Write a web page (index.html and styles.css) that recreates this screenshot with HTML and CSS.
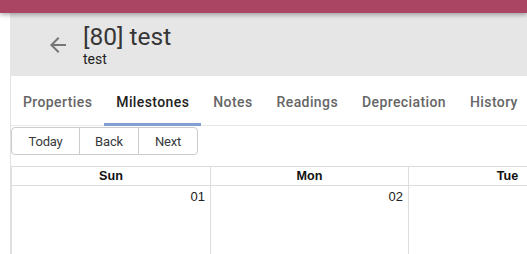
FILE: index.html
```html
<!DOCTYPE html>
<html lang="en">
<head>
    <meta charset="UTF-8">
    <meta name="viewport" content="width=device-width, initial-scale=1.0">
    <title>[80] test</title>
    <link rel="stylesheet" href="styles.css">
</head>
<body>
<div class="appbar"></div>
<div class="layout">
    <div class="gutter"></div>
    <div class="main">
        <div class="page-header">
            <button class="back-btn" aria-label="Back">
                <svg viewBox="0 0 24 24" width="24" height="24"><path d="M20 11H7.83l5.59-5.59L12 4l-8 8 8 8 1.41-1.41L7.83 13H20v-2z"/></svg>
            </button>
            <div class="titles">
                <div class="title">[80] test</div>
                <div class="subtitle">test</div>
            </div>
        </div>
        <div class="panel">
            <div class="tabs">
                <div class="tab">Properties</div>
                <div class="tab active">Milestones</div>
                <div class="tab">Notes</div>
                <div class="tab">Readings</div>
                <div class="tab">Depreciation</div>
                <div class="tab">History</div>
            </div>
            <div class="toolbar">
                <div class="btn-group">
                    <button class="btn-today">Today</button>
                    <button>Back</button>
                    <button>Next</button>
                </div>
            </div>
            <!-- only the first three days fit in the window -->
            <div class="month">
                <div class="month-header">
                    <div class="day-name">Sun</div>
                    <div class="day-name">Mon</div>
                    <div class="day-name">Tue</div>
                    <div class="day-name"></div>
                    <div class="day-name"></div>
                    <div class="day-name"></div>
                    <div class="day-name"></div>
                </div>
                <div class="month-row">
                    <div class="day-cell">01</div>
                    <div class="day-cell">02</div>
                    <div class="day-cell"></div>
                    <div class="day-cell"></div>
                    <div class="day-cell"></div>
                    <div class="day-cell"></div>
                    <div class="day-cell"></div>
                </div>
            </div>
        </div>
    </div>
</div>
</body>
</html>
```

FILE: styles.css
```css
body {
    margin: 0;
    padding: 0;
    font-family: Roboto, "Liberation Sans", Arial, sans-serif;
    background-color: #fff;
    overflow: hidden;
}
.appbar {
    position: relative;
    z-index: 2;
    height: 13px;
    background-color: #aa4564;
    box-shadow: 0 2px 4px rgba(0, 0, 0, 0.3);
}
.layout {
    display: flex;
}
.gutter {
    width: 10px;
    flex: none;
}
.main {
    flex: 1;
    min-width: 0;
    overflow: hidden;
}
.page-header {
    height: 63px;
    background-color: #e6e6e6;
    display: flex;
    align-items: center;
    padding-left: 24px;
}
.back-btn {
    width: 48px;
    height: 48px;
    padding: 12px;
    border: none;
    background: none;
    fill: #757575;
    margin-top: 1px;
}
.back-btn svg {
    display: block;
}
.titles {
    margin-left: 1px;
    color: #363636;
}
.title {
    font-size: 24.5px;
    line-height: 29px;
}
.subtitle {
    font-size: 14px;
    line-height: 17px;
    color: #222;
}
.panel {
    border-left: 1px solid #e2e2e2;
}
.tabs {
    display: flex;
    height: 50px;
    border-bottom: 1px solid #e8e8e8;
    box-sizing: border-box;
}
.tab {
    position: relative;
    padding: 3px 12px 0;
    display: flex;
    align-items: center;
    font-size: 14px;
    font-weight: 500;
    letter-spacing: 0.4px;
    color: #666;
    white-space: nowrap;
}
.tab.active {
    color: #222;
}
.tab.active::after {
    content: "";
    position: absolute;
    left: 0;
    right: 0;
    bottom: -1px;
    height: 3px;
    background-color: #819fcf;
}
.toolbar {
    padding-top: 1px;
    margin-bottom: 11px;
}
.btn-group {
    display: inline-flex;
}
.btn-group button {
    font-family: Roboto, sans-serif;
    font-size: 13px;
    letter-spacing: -0.2px;
    color: #373a3c;
    background: #fff;
    border: 1px solid #ccc;
    width: 60px;
    padding: 0;
    height: 28px;
    text-align: center;
}
.btn-group .btn-today {
    width: 69px;
}
.btn-group button + button {
    margin-left: -1px;
}
.btn-group button:first-child {
    border-radius: 4px 0 0 4px;
}
.btn-group button:last-child {
    border-radius: 0 4px 4px 0;
}
.month {
    width: 1386px;
    border: 1px solid #ddd;
    font-family: "Liberation Sans", Arial, sans-serif;
}
.month-header,
.month-row {
    display: grid;
    grid-template-columns: repeat(7, 198px);
}
.day-name {
    height: 18px;
    line-height: 18px;
    text-align: center;
    font-weight: bold;
    font-size: 12.6px;
    color: #111;
    border-bottom: 1px solid #ddd;
}
.day-name + .day-name,
.day-cell + .day-cell {
    border-left: 1px solid #ddd;
}
.day-cell {
    height: 100px;
    text-align: right;
    padding: 3px 5px 0 0;
    font-size: 13px;
    color: #222;
}
```
